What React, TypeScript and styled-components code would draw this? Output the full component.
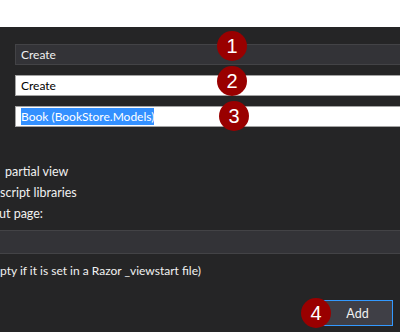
import styled, { createGlobalStyle } from "styled-components"

const GlobalStyle = createGlobalStyle`
	html, body {
		margin: 0;
		padding: 0;
		background: #ffffff;
		overflow: hidden;
	}
	body {
		font-family: Lato, "Noto Sans", sans-serif;
		font-size: 12px;
	}
`

const steps = ["1", "2", "3"]

export default function App() {
	return (
		<Page>
			<GlobalStyle />
			<TopStrip />
			<Dialog>
				<Fields>
					<FieldRow>
						<Field dark>Create</Field>
						<Badge top={-13} left={202}>{steps[0]}</Badge>
					</FieldRow>
					<FieldRow>
						<Field>Create</Field>
						<Badge top={-9} left={202}>{steps[1]}</Badge>
					</FieldRow>
					<FieldRow>
						<Field>
							<Selected>Book (BookStore.Models)</Selected>
						</Field>
						<Badge top={-5} left={204}>{steps[2]}</Badge>
					</FieldRow>
				</Fields>

				<Options>
					<OptionLabel shift={5}>partial view</OptionLabel>
					<OptionLabel shift={0}>script libraries</OptionLabel>
					<OptionLabel shift={-1}>ut page:</OptionLabel>
				</Options>

				<LayoutField />
				<Hint>pty if it is set in a Razor _viewstart file)</Hint>

				<Footer>
					<ButtonWrap>
						<Badge top={-2} left={-21}>4</Badge>
						<AddButton>Add</AddButton>
					</ButtonWrap>
				</Footer>
			</Dialog>
		</Page>
	)
}

const Page = styled.div`
	width: 400px;
	height: 332px;
	display: flex;
	flex-direction: column;
`

const TopStrip = styled.div`
	height: 27px;
	background: #ffffff;
`

const Dialog = styled.div`
	flex: 1;
	background: #252526;
	color: #f1f1f1;
	display: flex;
	flex-direction: column;
	padding-top: 17px;
`

const Fields = styled.div`
	display: flex;
	flex-direction: column;
	gap: 10px;
	padding-left: 15px;
`

const FieldRow = styled.div`
	position: relative;
`

const Field = styled.div<{ dark?: boolean }>`
	height: 21px;
	box-sizing: border-box;
	margin-right: -2px;
	padding-left: 5px;
	display: flex;
	align-items: center;
	font-size: 12px;
	background: ${(p) => (p.dark ? "#333337" : "#ffffff")};
	color: ${(p) => (p.dark ? "#f1f1f1" : "#000000")};
	border: 1px solid ${(p) => (p.dark ? "#434346" : "#a3a3a3")};
`

const Selected = styled.span`
	background: #3390ff;
	color: #ffffff;
	line-height: 17px;
`

const Badge = styled.div<{ top: number; left: number }>`
	position: absolute;
	top: ${(p) => p.top}px;
	left: ${(p) => p.left}px;
	width: 30px;
	height: 30px;
	border-radius: 50%;
	background: #990000;
	color: #ffffff;
	font-family: "Liberation Sans", Arial, sans-serif;
	font-size: 20px;
	display: flex;
	align-items: center;
	justify-content: center;
	z-index: 2;
`

const Options = styled.div`
	margin-top: 34px;
	display: flex;
	flex-direction: column;
`

const OptionLabel = styled.div<{ shift: number }>`
	line-height: 21px;
	font-size: 12.5px;
	margin-left: ${(p) => p.shift}px;
	white-space: nowrap;
`

const LayoutField = styled.div`
	margin-top: 6px;
	margin-left: -2px;
	margin-right: -2px;
	height: 24px;
	box-sizing: border-box;
	background: #333337;
	border: 1px solid #434346;
`

const Hint = styled.div`
	margin-top: 8px;
	line-height: 18px;
	font-size: 12px;
	white-space: nowrap;
`

const Footer = styled.div`
	margin-top: auto;
	margin-bottom: 6px;
	display: flex;
	justify-content: flex-end;
	padding-right: 7px;
`

const ButtonWrap = styled.div`
	position: relative;
`

const AddButton = styled.div`
	width: 71px;
	height: 26px;
	box-sizing: border-box;
	background: #3f3f46;
	border: 1px solid #3399ff;
	color: #f1f1f1;
	font-size: 12.5px;
	display: flex;
	align-items: center;
	justify-content: center;
`
